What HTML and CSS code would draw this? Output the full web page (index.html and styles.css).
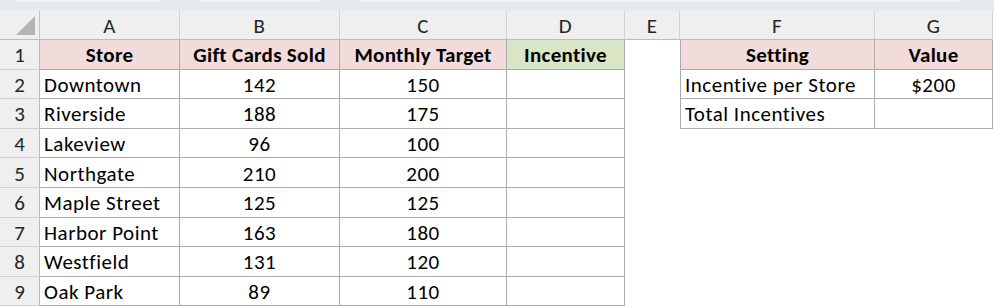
FILE: index.html
```html
<!DOCTYPE html>
<html>
<head>
<meta charset="utf-8">
<link rel="stylesheet" href="styles.css">
</head>
<body>
<div class="topstrip"><span class="seg s1"></span><span class="seg s2"></span><span class="seg s3"></span></div>
<div class="sheet">
  <div class="ch corner"><span class="tri"></span></div>
  <div class="ch">A</div><div class="ch">B</div><div class="ch">C</div><div class="ch">D</div><div class="ch">E</div><div class="ch">F</div><div class="ch">G</div>

  <div class="rh">1</div>
  <div class="c hd pink">Store</div><div class="c hd pink">Gift Cards Sold</div><div class="c hd pink">Monthly Target</div><div class="c hd green">Incentive</div>
  <div class="e"></div>
  <div class="c hd pink first">Setting</div><div class="c hd pink">Value</div>

  <div class="rh">2</div>
  <div class="c l">Downtown</div><div class="c">142</div><div class="c">150</div><div class="c"></div>
  <div class="e"></div>
  <div class="c l first">Incentive per Store</div><div class="c">$200</div>

  <div class="rh">3</div>
  <div class="c l">Riverside</div><div class="c">188</div><div class="c">175</div><div class="c"></div>
  <div class="e"></div>
  <div class="c l first">Total Incentives</div><div class="c"></div>

  <div class="rh">4</div>
  <div class="c l">Lakeview</div><div class="c">96</div><div class="c">100</div><div class="c"></div>
  <div class="e"></div><div class="e"></div><div class="e"></div>

  <div class="rh">5</div>
  <div class="c l">Northgate</div><div class="c">210</div><div class="c">200</div><div class="c"></div>
  <div class="e"></div><div class="e"></div><div class="e"></div>

  <div class="rh">6</div>
  <div class="c l">Maple Street</div><div class="c">125</div><div class="c">125</div><div class="c"></div>
  <div class="e"></div><div class="e"></div><div class="e"></div>

  <div class="rh">7</div>
  <div class="c l">Harbor Point</div><div class="c">163</div><div class="c">180</div><div class="c"></div>
  <div class="e"></div><div class="e"></div><div class="e"></div>

  <div class="rh">8</div>
  <div class="c l">Westfield</div><div class="c">131</div><div class="c">120</div><div class="c"></div>
  <div class="e"></div><div class="e"></div><div class="e"></div>

  <div class="rh">9</div>
  <div class="c l">Oak Park</div><div class="c">89</div><div class="c">110</div><div class="c"></div>
  <div class="e"></div><div class="e"></div><div class="e"></div>
</div>
</body>
</html>
```
FILE: styles.css
```css
html, body {
  margin: 0;
  padding: 0;
  background: #ffffff;
}
body {
  font-family: "Carlito", "Lato", "Liberation Sans", sans-serif;
  font-size: 21px;
  color: #000;
  width: 994px;
  height: 307px;
  overflow: hidden;
}
.topstrip {
  height: 11px;
  background: #e6e9ed;
  display: flex;
}
.seg {
  height: 2px;
  background: #f1f3f5;
}
.s1 { margin-left: 17px; width: 143px; }
.s2 { margin-left: 40px; width: 120px; }
.s3 { margin-left: 40px; width: 600px; }
.sheet {
  display: grid;
  grid-template-columns: 40px 140px 160px 167px 118px 55px 195px 118px;
  grid-template-rows: 29px repeat(9, 29.6px);
}
.ch {
  background: #efefef;
  border-right: 1px solid #d2d2d2;
  border-bottom: 1px solid #bdbdbd;
  display: flex;
  align-items: center;
  justify-content: center;
  color: #262626;
  padding-top: 2px;
  box-sizing: border-box;
  letter-spacing: 0.4px;
}
.corner {
  position: relative;
  border-right: 1px solid #c4c4c4;
}
.tri {
  position: absolute;
  right: 4px;
  bottom: 4px;
  width: 0;
  height: 0;
  border-left: 19px solid transparent;
  border-bottom: 19px solid #b4b4b4;
}
.rh {
  background: #efefef;
  border-right: 1px solid #b8b8b8;
  border-bottom: 1px solid #d0d0d0;
  display: flex;
  align-items: center;
  justify-content: center;
  box-sizing: border-box;
  padding-top: 2px;
  color: #262626;
}
.c {
  border-right: 1px solid #ababab;
  border-bottom: 1px solid #ababab;
  box-sizing: border-box;
  display: flex;
  align-items: center;
  justify-content: center;
  padding-top: 2px;
  white-space: nowrap;
  letter-spacing: 0.5px;
}
.c.l {
  justify-content: flex-start;
  padding-left: 4px;
}
.c.first {
  border-left: 1px solid #ababab;
}
.hd {
  font-weight: bold;
  letter-spacing: 0.3px;
}
.pink { background: #f2dcdb; }
.green { background: #d9e5c4; }
.e {
  background: #ffffff;
}
```
